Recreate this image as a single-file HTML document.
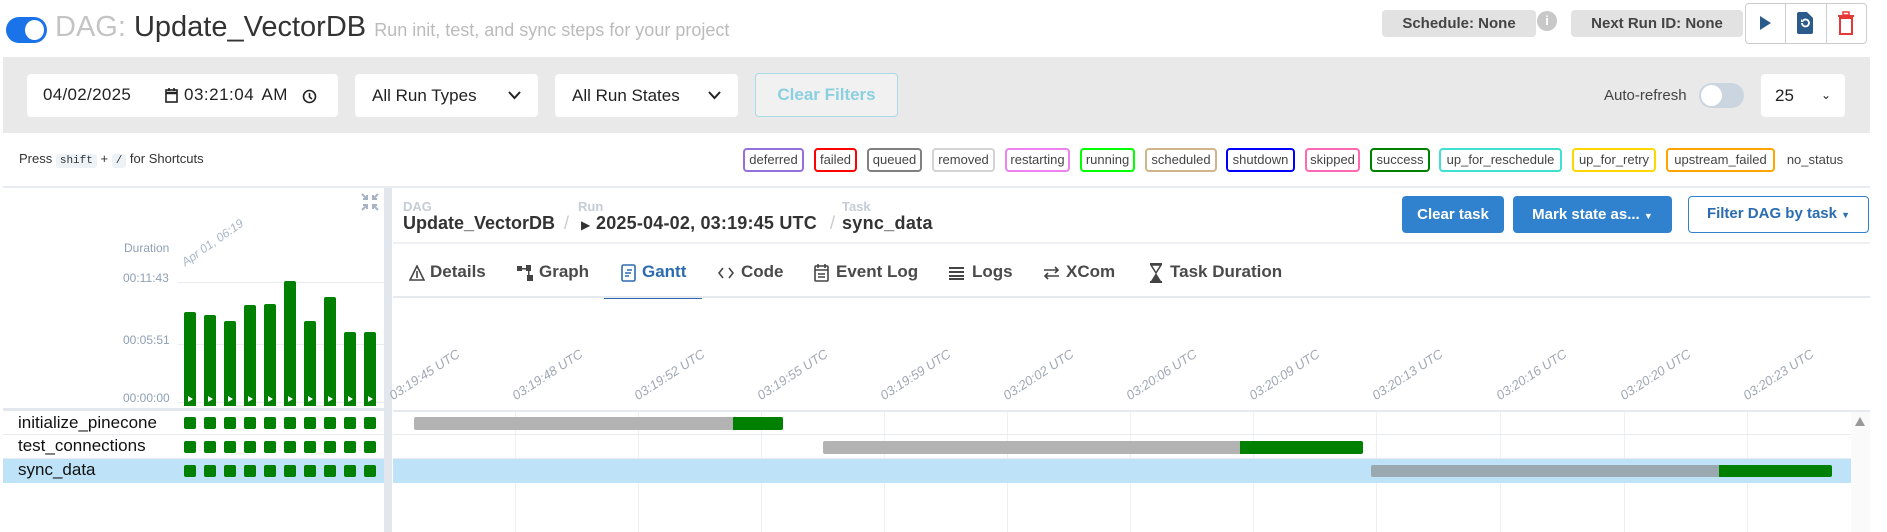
<!DOCTYPE html>
<html><head><meta charset="utf-8"><style>
*{box-sizing:border-box;margin:0;padding:0}
body{width:1887px;height:532px;overflow:hidden;background:#fff;font-family:"Liberation Sans",Arial,sans-serif;position:relative;color:#333}
.a{position:absolute}
.leg{position:absolute;top:148px;height:24px;border:2px solid;border-radius:4px;font-size:13px;line-height:20px;text-align:center;color:#444;white-space:nowrap}
.tab{position:absolute;top:262px;font-size:17px;font-weight:bold;color:#4a4a4a;white-space:nowrap}
.bar{position:absolute;width:12px;background:#008000;border-radius:2px 2px 0 0;bottom:126px}
.bar:after{content:"";position:absolute;left:4px;bottom:4px;border-left:5px solid #fff;border-top:3px solid transparent;border-bottom:3px solid transparent}
.sq{position:absolute;width:12px;height:12px;background:#008000;border-radius:2px}
.ax{position:absolute;font-size:13px;color:#a0a8b4;font-style:italic;transform-origin:0 100%;transform:rotate(-33deg);white-space:nowrap;line-height:13px}
.gl{position:absolute;top:411px;bottom:0;width:1px;background:#eef0f3}
</style></head><body>
<!-- header -->
<div class="a" style="left:6px;top:17px;width:41px;height:26px;border-radius:13px;background:#1a73e8"></div>
<div class="a" style="left:25px;top:20px;width:19px;height:20px;border-radius:50%;background:#fff"></div>
<div class="a" style="left:55px;top:11px;font-size:29px;white-space:nowrap"><span style="color:#c4c4c4">DAG:</span> <span style="color:#333">Update_VectorDB</span> <span style="color:#bbb;font-size:18px">Run init, test, and sync steps for your project</span></div>
<div class="a" style="left:1382px;top:10px;width:154px;height:27px;background:#e2e2e2;border-radius:4px;font-size:15px;font-weight:bold;color:#444;line-height:27px;text-align:center">Schedule: None</div>
<div class="a" style="left:1537px;top:11px;width:20px;height:20px;border-radius:50%;background:#c8c8c8;color:#fff;font-size:13px;font-weight:bold;text-align:center;line-height:20px">i</div>
<div class="a" style="left:1571px;top:10px;width:172px;height:27px;background:#e2e2e2;border-radius:4px;font-size:15px;font-weight:bold;color:#444;line-height:27px;text-align:center">Next Run ID: None</div>
<div class="a" style="left:1745px;top:3px;width:122px;height:41px;border:1px solid #ccc;border-radius:4px"></div>
<div class="a" style="left:1785px;top:3px;width:1px;height:41px;background:#ccc"></div>
<div class="a" style="left:1826px;top:3px;width:1px;height:41px;background:#ccc"></div>
<div class="a" style="left:1760px;top:16px;border-left:11px solid #2a5b8a;border-top:7px solid transparent;border-bottom:7px solid transparent"></div>
<svg class="a" style="left:1797px;top:12px" width="16" height="22" viewBox="0 0 16 22"><path d="M0 2a2 2 0 0 1 2-2h8l6 6v14a2 2 0 0 1-2 2H2a2 2 0 0 1-2-2z" fill="#2a5b8a"/><path d="M5 11a3.5 3.5 0 1 0 1-2.5" stroke="#fff" stroke-width="1.8" fill="none"/><path d="M4 7v3h3z" fill="#fff"/></svg>
<svg class="a" style="left:1838px;top:11px" width="16" height="24" viewBox="0 0 16 24"><rect x="0" y="4" width="16" height="2" fill="#e53935"/><rect x="5" y="1" width="6" height="3" fill="none" stroke="#e53935" stroke-width="1.5"/><rect x="2" y="7" width="12" height="16" fill="none" stroke="#e53935" stroke-width="2"/></svg>

<!-- filter bar -->
<div class="a" style="left:3px;top:57px;width:1867px;height:76px;background:#e9e9e9"></div>
<div class="a" style="left:27px;top:74px;width:311px;height:43px;background:#fff;border-radius:4px"></div>
<div class="a" style="left:43px;top:85px;font-size:17px;color:#222;letter-spacing:0.3px">04/02/2025</div>
<svg class="a" style="left:165px;top:88px" width="13" height="15" viewBox="0 0 13 15" fill="none" stroke="#222" stroke-width="1.6"><rect x="1" y="2" width="11" height="12"/><path d="M1 5h11" stroke-width="2.5"/><path d="M4 0v3M9 0v3"/></svg>
<div class="a" style="left:184px;top:85px;font-size:17px;color:#222;letter-spacing:0.5px;word-spacing:3px">03:21:04 AM</div>
<svg class="a" style="left:302px;top:89px" width="15" height="15" viewBox="0 0 15 15" fill="none" stroke="#222" stroke-width="1.6"><circle cx="7.5" cy="7.5" r="6"/><path d="M7.5 4v4l2.5 2"/></svg>
<div class="a" style="left:355px;top:74px;width:183px;height:43px;background:#fff;border-radius:4px;font-size:17px;line-height:43px;padding-left:17px;color:#222">All Run Types<svg style="position:absolute;right:17px;top:17px" width="13" height="9"><path d="M1 1l5.5 6L12 1" stroke="#222" stroke-width="2" fill="none"/></svg></div>
<div class="a" style="left:555px;top:74px;width:183px;height:43px;background:#fff;border-radius:4px;font-size:17px;line-height:43px;padding-left:17px;color:#222">All Run States<svg style="position:absolute;right:17px;top:17px" width="13" height="9"><path d="M1 1l5.5 6L12 1" stroke="#222" stroke-width="2" fill="none"/></svg></div>
<div class="a" style="left:755px;top:73px;width:143px;height:44px;background:#f1f1f1;border:1.5px solid #a9dbe4;border-radius:4px;font-size:17px;font-weight:bold;color:#8cd0e0;line-height:41px;text-align:center">Clear Filters</div>
<div class="a" style="left:1604px;top:87px;font-size:15px;color:#444">Auto-refresh</div>
<div class="a" style="left:1699px;top:83px;width:45px;height:25px;border-radius:13px;background:#cbd5e0"></div>
<div class="a" style="left:1701px;top:85px;width:21px;height:21px;border-radius:50%;background:#fff"></div>
<div class="a" style="left:1761px;top:74px;width:84px;height:43px;background:#fff;border-radius:4px;font-size:17px;line-height:43px;padding-left:14px;color:#222">25<span style="position:absolute;right:14px;top:0;font-size:12px">&#8964;</span></div>

<!-- shortcuts + legend -->
<div class="a" style="left:19px;top:151px;font-size:13px;color:#333;white-space:nowrap">Press <span style="background:#edf2f7;border-radius:3px;padding:1px 4px;font-family:'Liberation Mono',monospace;font-size:11px">shift</span> + <span style="background:#edf2f7;border-radius:3px;padding:1px 4px;font-family:'Liberation Mono',monospace;font-size:11px">/</span> for Shortcuts</div>
<div class="leg" style="left:743px;width:61px;border-color:#9370db">deferred</div>
<div class="leg" style="left:814px;width:43px;border-color:red">failed</div>
<div class="leg" style="left:867px;width:55px;border-color:gray">queued</div>
<div class="leg" style="left:932px;width:63px;border-color:lightgrey">removed</div>
<div class="leg" style="left:1005px;width:65px;border-color:violet">restarting</div>
<div class="leg" style="left:1080px;width:55px;border-color:lime">running</div>
<div class="leg" style="left:1145px;width:72px;border-color:tan">scheduled</div>
<div class="leg" style="left:1226px;width:69px;border-color:blue">shutdown</div>
<div class="leg" style="left:1305px;width:55px;border-color:hotpink">skipped</div>
<div class="leg" style="left:1370px;width:60px;border-color:green">success</div>
<div class="leg" style="left:1439px;width:123px;border-color:turquoise">up_for_reschedule</div>
<div class="leg" style="left:1572px;width:84px;border-color:gold">up_for_retry</div>
<div class="leg" style="left:1666px;width:109px;border-color:orange">upstream_failed</div>
<div class="leg" style="left:1784px;width:62px;border-color:transparent">no_status</div>
<div class="a" style="left:3px;top:186px;width:1867px;height:2px;background:#e8ebf0"></div>

<!-- left panel -->
<div class="a" style="left:384px;top:188px;width:8px;height:344px;background:#e2e7ee"></div>
<svg class="a" style="left:361px;top:193px" width="18" height="18" viewBox="0 0 18 18" stroke="#a8b3c2" stroke-width="2" fill="none"><path d="M1 1l5 5M6 2v4H2M17 1l-5 5M12 2v4h4M1 17l5-5M6 16v-4H2M17 17l-5-5M12 16v-4h4"/></svg>
<div class="a" style="left:124px;top:241px;font-size:12px;color:#8fa0b5">Duration</div>
<div class="a" style="left:187px;top:255px;font-size:12px;color:#a8b6c8;font-style:italic;transform-origin:0 100%;transform:rotate(-35deg);white-space:nowrap">Apr 01, 06:19</div>
<div class="a" style="left:123px;top:271px;font-size:12px;color:#8fa0b5">00:11:43</div>
<div class="a" style="left:123px;top:333px;font-size:12px;color:#8fa0b5">00:05:51</div>
<div class="a" style="left:123px;top:391px;font-size:12px;color:#8fa0b5">00:00:00</div>
<div class="a" style="left:178px;top:282px;width:206px;height:1px;background:#e8ebf0"></div>
<div class="a" style="left:178px;top:344px;width:206px;height:1px;background:#e8ebf0"></div>
<div class="a" style="left:178px;top:402px;width:206px;height:1px;background:#e8ebf0"></div>
<div class="bar" style="left:184px;top:312px"></div>
<div class="bar" style="left:204px;top:315px"></div>
<div class="bar" style="left:224px;top:321px"></div>
<div class="bar" style="left:244px;top:305px"></div>
<div class="bar" style="left:264px;top:304px"></div>
<div class="bar" style="left:284px;top:281px"></div>
<div class="bar" style="left:304px;top:321px"></div>
<div class="bar" style="left:324px;top:297px"></div>
<div class="bar" style="left:344px;top:332px"></div>
<div class="bar" style="left:364px;top:332px"></div>
<div class="a" style="left:3px;top:408px;width:381px;height:3px;background:#e2e7ee"></div>
<div class="a" style="left:3px;top:434px;width:381px;height:1px;background:#e8ebf0"></div>
<div class="a" style="left:3px;top:458px;width:381px;height:1px;background:#e8ebf0"></div>
<div class="a" style="left:3px;top:459px;width:381px;height:24px;background:#bee3f8"></div>
<div class="a" style="left:18px;top:412px;font-size:17px;line-height:22px;color:#111">initialize_pinecone</div>
<div class="a" style="left:18px;top:435px;font-size:17px;line-height:22px;color:#111">test_connections</div>
<div class="a" style="left:18px;top:459px;font-size:17px;line-height:22px;color:#111">sync_data</div>

<!-- right panel header -->
<div class="a" style="left:403px;top:199px;font-size:13px;font-weight:bold;color:#c5ccd6">DAG</div>
<div class="a" style="left:578px;top:199px;font-size:13px;font-weight:bold;color:#c5ccd6">Run</div>
<div class="a" style="left:842px;top:199px;font-size:13px;font-weight:bold;color:#c5ccd6">Task</div>
<div class="a" style="left:403px;top:213px;font-size:18px;font-weight:bold;color:#333;white-space:nowrap">Update_VectorDB</div>
<div class="a" style="left:564px;top:213px;font-size:18px;color:#ccc">/</div>
<div class="a" style="left:581px;top:218px;font-size:12px;color:#333">&#9654;</div>
<div class="a" style="left:596px;top:213px;font-size:18px;font-weight:bold;color:#333;white-space:nowrap;letter-spacing:0.2px">2025-04-02, 03:19:45 UTC</div>
<div class="a" style="left:830px;top:213px;font-size:18px;color:#ccc">/</div>
<div class="a" style="left:842px;top:213px;font-size:18px;font-weight:bold;color:#333;letter-spacing:0.3px">sync_data</div>
<div class="a" style="left:1402px;top:196px;width:102px;height:37px;background:#3182ce;border-radius:4px;color:#fff;font-size:15px;font-weight:bold;line-height:37px;text-align:center">Clear task</div>
<div class="a" style="left:1513px;top:196px;width:159px;height:37px;background:#3182ce;border-radius:4px;color:#fff;font-size:15px;font-weight:bold;line-height:37px;text-align:center">Mark state as... <span style="font-size:9px">&#9660;</span></div>
<div class="a" style="left:1688px;top:196px;width:181px;height:37px;background:#fff;border:1.5px solid #3182ce;border-radius:4px;color:#2b6cb0;font-size:15px;font-weight:bold;line-height:34px;text-align:center">Filter DAG by task <span style="font-size:9px">&#9660;</span></div>
<div class="a" style="left:393px;top:242px;width:1477px;height:2px;background:#eef0f3"></div>

<!-- tabs -->
<svg class="a" style="left:409px;top:265px" width="16" height="16" viewBox="0 0 16 16" fill="none" stroke="#444" stroke-width="1.6"><path d="M8 1L1 15h14z M8 6v7"/></svg>
<div class="tab" style="left:430px">Details</div>
<svg class="a" style="left:517px;top:265px" width="17" height="16" viewBox="0 0 17 16" fill="#444"><rect x="0" y="1" width="5" height="5"/><rect x="5" y="3" width="5" height="1.5"/><rect x="9" y="0" width="5" height="6"/><rect x="11" y="6" width="1.5" height="4"/><rect x="10" y="10" width="6" height="6"/></svg>
<div class="tab" style="left:539px">Graph</div>
<svg class="a" style="left:621px;top:264px" width="15" height="18" viewBox="0 0 15 18" fill="none" stroke="#2b6cb0" stroke-width="1.6"><rect x="1" y="1" width="13" height="16" rx="1.5"/><path d="M6 6h5M4 9h6M4 12h4"/></svg>
<div class="tab" style="left:642px;color:#2b6cb0">Gantt</div>
<div class="a" style="left:604px;top:296px;width:98px;height:3px;background:#2b6cb0"></div>
<svg class="a" style="left:718px;top:267px" width="16" height="12" viewBox="0 0 16 12" fill="none" stroke="#444" stroke-width="1.6"><path d="M5 1L1 6l4 5M11 1l4 5-4 5"/></svg>
<div class="tab" style="left:741px">Code</div>
<svg class="a" style="left:814px;top:264px" width="15" height="18" viewBox="0 0 15 18" fill="none" stroke="#444" stroke-width="1.6"><rect x="1" y="2" width="13" height="15" rx="1"/><path d="M1 6h13M4 0v4M11 0v4M4 10h7M4 13h7"/></svg>
<div class="tab" style="left:836px">Event Log</div>
<svg class="a" style="left:949px;top:267px" width="15" height="13" viewBox="0 0 15 13" fill="#444"><rect y="0" width="15" height="2"/><rect y="4" width="15" height="2"/><rect y="8" width="15" height="2"/><rect y="11" width="15" height="2"/></svg>
<div class="tab" style="left:972px">Logs</div>
<svg class="a" style="left:1043px;top:266px" width="17" height="14" viewBox="0 0 17 14" fill="none" stroke="#444" stroke-width="1.6"><path d="M1 4h14M12 1l3 3-3 3M16 10H2M5 7l-3 3 3 3"/></svg>
<div class="tab" style="left:1066px">XCom</div>
<svg class="a" style="left:1150px;top:263px" width="12" height="20" viewBox="0 0 12 20" fill="#444"><rect x="0" y="0" width="12" height="2"/><rect x="0" y="18" width="12" height="2"/><path d="M1 2h10L6 10z" fill="none" stroke="#444" stroke-width="1.5"/><path d="M6 10L1 18h10z"/></svg>
<div class="tab" style="left:1170px">Task Duration</div>
<div class="a" style="left:393px;top:296px;width:1477px;height:2px;background:#e6e9ee"></div>

<!-- gantt -->
<div class="gl" style="left:515px"></div><div class="gl" style="left:638px"></div><div class="gl" style="left:761px"></div><div class="gl" style="left:884px"></div><div class="gl" style="left:1007px"></div><div class="gl" style="left:1130px"></div><div class="gl" style="left:1253px"></div><div class="gl" style="left:1376px"></div><div class="gl" style="left:1500px"></div><div class="gl" style="left:1624px"></div><div class="gl" style="left:1747px"></div>
<div class="ax" style="left:394px;top:389px">03:19:45 UTC</div>
<div class="ax" style="left:517px;top:389px">03:19:48 UTC</div>
<div class="ax" style="left:639px;top:389px">03:19:52 UTC</div>
<div class="ax" style="left:762px;top:389px">03:19:55 UTC</div>
<div class="ax" style="left:885px;top:389px">03:19:59 UTC</div>
<div class="ax" style="left:1008px;top:389px">03:20:02 UTC</div>
<div class="ax" style="left:1131px;top:389px">03:20:06 UTC</div>
<div class="ax" style="left:1254px;top:389px">03:20:09 UTC</div>
<div class="ax" style="left:1377px;top:389px">03:20:13 UTC</div>
<div class="ax" style="left:1501px;top:389px">03:20:16 UTC</div>
<div class="ax" style="left:1625px;top:389px">03:20:20 UTC</div>
<div class="ax" style="left:1748px;top:389px">03:20:23 UTC</div>
<div class="a" style="left:393px;top:410px;width:1477px;height:2px;background:#e6e9ee"></div>
<div class="a" style="left:393px;top:434px;width:1458px;height:1px;background:#e8ebf0"></div>
<div class="a" style="left:393px;top:458px;width:1458px;height:1px;background:#e8ebf0"></div>
<div class="a" style="left:393px;top:459px;width:1458px;height:24px;background:#bee3f8"></div>
<div class="a" style="left:1851px;top:412px;width:19px;height:120px;background:#fafafa"></div>
<div class="a" style="left:1855px;top:417px;border-bottom:9px solid #999;border-left:5px solid transparent;border-right:5px solid transparent"></div>
<div class="a" style="left:414px;top:417px;width:319px;height:13px;background:#b3b3b3;border-radius:2px 0 0 2px"></div>
<div class="a" style="left:733px;top:417px;width:50px;height:13px;background:#008000;border-radius:0 2px 2px 0"></div>
<div class="a" style="left:823px;top:441px;width:417px;height:13px;background:#b3b3b3;border-radius:2px 0 0 2px"></div>
<div class="a" style="left:1240px;top:441px;width:123px;height:13px;background:#008000;border-radius:0 2px 2px 0"></div>
<div class="a" style="left:1371px;top:465px;width:348px;height:12px;background:#9aa8b0;border-radius:2px 0 0 2px"></div>
<div class="a" style="left:1719px;top:465px;width:113px;height:12px;background:#008000;border-radius:0 2px 2px 0"></div>

<!-- squares -->
<div class="sq" style="left:184px;top:417px"></div><div class="sq" style="left:204px;top:417px"></div><div class="sq" style="left:224px;top:417px"></div><div class="sq" style="left:244px;top:417px"></div><div class="sq" style="left:264px;top:417px"></div><div class="sq" style="left:284px;top:417px"></div><div class="sq" style="left:304px;top:417px"></div><div class="sq" style="left:324px;top:417px"></div><div class="sq" style="left:344px;top:417px"></div><div class="sq" style="left:364px;top:417px"></div>
<div class="sq" style="left:184px;top:441px"></div><div class="sq" style="left:204px;top:441px"></div><div class="sq" style="left:224px;top:441px"></div><div class="sq" style="left:244px;top:441px"></div><div class="sq" style="left:264px;top:441px"></div><div class="sq" style="left:284px;top:441px"></div><div class="sq" style="left:304px;top:441px"></div><div class="sq" style="left:324px;top:441px"></div><div class="sq" style="left:344px;top:441px"></div><div class="sq" style="left:364px;top:441px"></div>
<div class="sq" style="left:184px;top:465px"></div><div class="sq" style="left:204px;top:465px"></div><div class="sq" style="left:224px;top:465px"></div><div class="sq" style="left:244px;top:465px"></div><div class="sq" style="left:264px;top:465px"></div><div class="sq" style="left:284px;top:465px"></div><div class="sq" style="left:304px;top:465px"></div><div class="sq" style="left:324px;top:465px"></div><div class="sq" style="left:344px;top:465px"></div><div class="sq" style="left:364px;top:465px"></div>
</body></html>
